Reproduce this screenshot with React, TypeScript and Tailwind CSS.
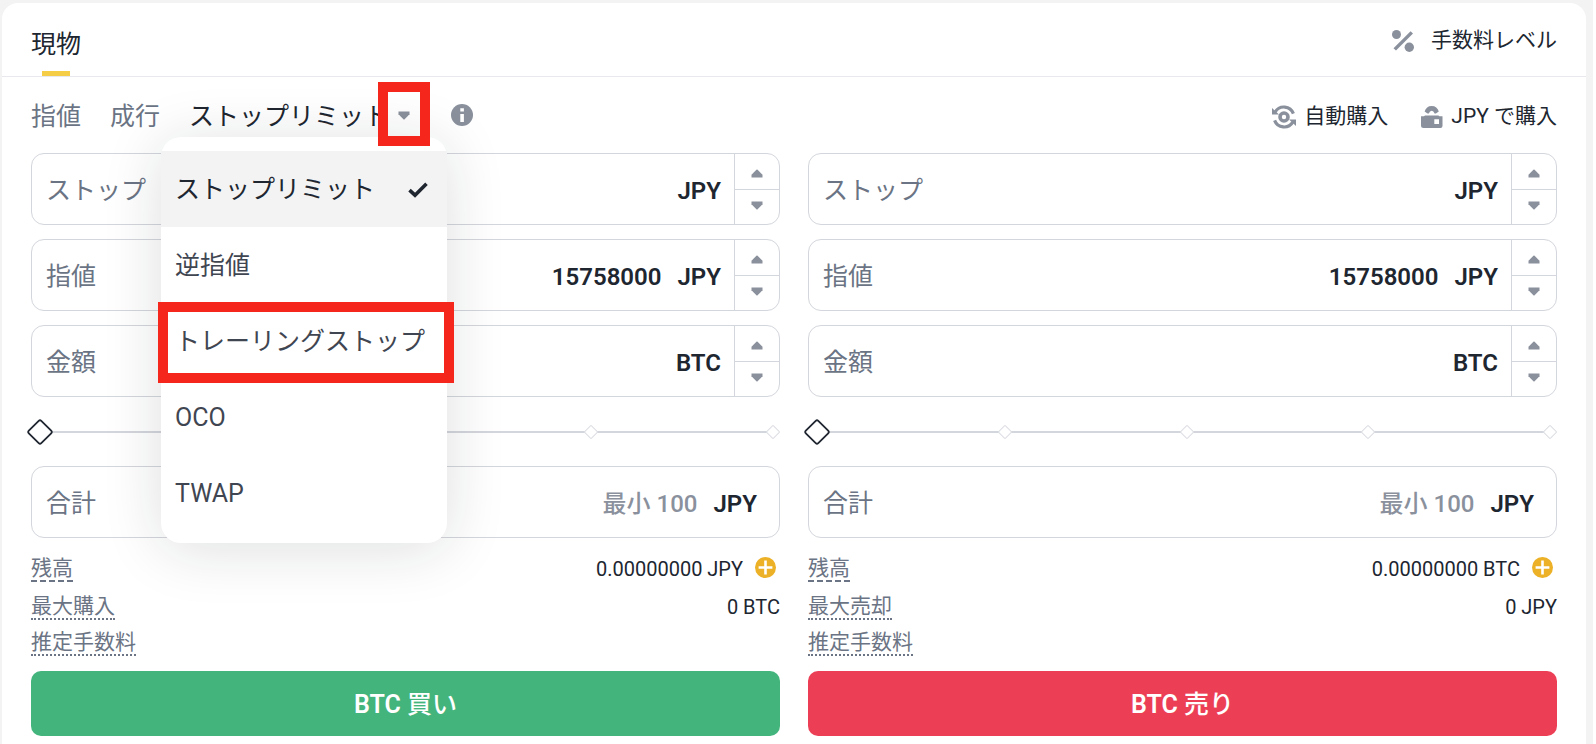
import { useState } from "react";

type Side = {
  id: string;
  maxLabel: string;
  balance: string;
  max: string;
  asset: string;
  verb: string;
  actionClass: string;
};

const sides: Side[] = [
  {
    id: "buy",
    maxLabel: "最大購入",
    balance: "0.00000000 JPY",
    max: "0 BTC",
    asset: "BTC",
    verb: "買い",
    actionClass: "bg-[#43b47c]",
  },
  {
    id: "sell",
    maxLabel: "最大売却",
    balance: "0.00000000 BTC",
    max: "0 JPY",
    asset: "BTC",
    verb: "売り",
    actionClass: "bg-[#ec3f56]",
  },
];

const orderTypes = ["ストップリミット", "逆指値", "トレーリングストップ", "OCO", "TWAP"];

function PercentIcon() {
  return (
    <svg width="22" height="22" viewBox="0 0 22 22" fill="#8a919d" aria-hidden="true">
      <circle cx="4.5" cy="4.5" r="4.5" />
      <circle cx="17.3" cy="17.2" r="4.7" />
      <path d="M18.6 1.2 21 3.6 4 20.600 1.500 18.200z" />
    </svg>
  );
}

function AutoBuyIcon() {
  return (
    <svg width="24" height="24" viewBox="0 0 24 24" fill="none" aria-hidden="true">
      <circle cx="12" cy="12" r="4" stroke="#8a919d" strokeWidth="3.6" />
      <path d="M3.200 6.800A10.200 10.200 0 0 1 21.400 8.600" stroke="#8a919d" strokeWidth="3.200" />
      <path d="M20.800 17.200A10.200 10.200 0 0 1 2.600 15.400" stroke="#8a919d" strokeWidth="3.200" />
      <path d="M0 3v6.600h7z" fill="#8a919d" />
      <path d="M24 21v-6.600h-7z" fill="#8a919d" />
    </svg>
  );
}

function WalletIcon() {
  return (
    <svg width="22" height="22" viewBox="0 0 22 22" aria-hidden="true">
      <path d="M3.600 5.600Q5.200 0 10.700 0t7.100 5.600l-2.900 1.900h-1.300Q12.600 4.700 10.700 4.700T7.800 7.500H6.500z" fill="#8a919d" />
      <path
        fillRule="evenodd"
        d="M0 10.300h3l1-0.800h13.400l1 0.800h3.100V20a2 2 0 0 1-2 2h-17a2.500 2.500 0 0 1-2.500-2.500zM13.300 13.300v4.700h4.700v-4.700z"
        fill="#8a919d"
      />
    </svg>
  );
}

function InfoIcon() {
  return (
    <svg width="22" height="22" viewBox="0 0 22 22" aria-hidden="true">
      <circle cx="11" cy="11" r="11" fill="#8a919d" />
      <path d="M9.300 4.200h3.600v3.300H9.300zM9.300 10h3.600v8H9.300z" fill="#fff" />
    </svg>
  );
}

function Caret({ up = false }: { up?: boolean }) {
  return (
    <svg
      width="12"
      height="9"
      viewBox="0 0 12 9"
      fill="#8a919d"
      className={up ? "rotate-180" : ""}
      aria-hidden="true"
    >
      <path d="M0.500 0.500h11v2.700L6.600 8.300a0.900 0.900 0 0 1-1.200 0L0.500 3.200z" />
    </svg>
  );
}

function CheckIcon() {
  return (
    <svg width="20" height="16" viewBox="0 0 20 16" aria-hidden="true">
      <path d="M1.500 8.200 7 13.200 18.500 1.800" fill="none" stroke="#202630" strokeWidth="3.600" />
    </svg>
  );
}

function PlusIcon() {
  return (
    <svg width="21" height="21" viewBox="0 0 21 21" aria-hidden="true">
      <circle cx="10.500" cy="10.500" r="10.500" fill="#ecb126" />
      <path d="M9.200 3.600h2.600v5.600h5.600v2.600h-5.600v5.600H9.200v-5.600H3.600V9.200h5.600z" fill="#fff" />
    </svg>
  );
}

function Field({
  id,
  label,
  unit,
  value,
  placeholder,
  stepper = true,
}: {
  id: string;
  label: string;
  unit: string;
  value?: string;
  placeholder?: string;
  stepper?: boolean;
}) {
  return (
    <div className="flex h-[72px] overflow-hidden rounded-[13px] border border-[#d3d6dc] bg-white">
      <div
        className={
          stepper
            ? "flex min-w-0 flex-1 items-center gap-4 pt-[3px] pr-[13px] pl-[14px]"
            : "flex min-w-0 flex-1 items-center gap-4 pt-[3px] pr-[22px] pl-[14px]"
        }
      >
        <label htmlFor={id} className="shrink-0 text-[25px] text-[#6b7484]">
          {label}
        </label>
        <input
          id={id}
          defaultValue={value}
          placeholder={placeholder}
          inputMode="decimal"
          className="w-full min-w-0 flex-1 bg-transparent text-right text-[24px] font-semibold text-[#202630] outline-none placeholder:font-medium placeholder:text-[#8a919d] placeholder:opacity-100"
        />
        <span className="text-[24px] font-semibold text-[#202630]">{unit}</span>
      </div>
      {stepper && (
        <div className="flex w-[45px] flex-col border-l border-[#d3d6dc]">
          <button
            type="button"
            aria-label={`${label}を増やす`}
            className="flex h-[35px] items-center justify-center pt-[3px]"
          >
            <Caret up />
          </button>
          <button
            type="button"
            aria-label={`${label}を減らす`}
            className="flex flex-1 items-center justify-center border-t border-[#d3d6dc] pb-[3px]"
          >
            <Caret />
          </button>
        </div>
      )}
    </div>
  );
}

function AmountSlider({ id }: { id: string }) {
  return (
    <div className="relative flex h-[69px] items-center justify-between pl-2">
      <span className="absolute inset-x-2 top-1/2 h-[2px] -translate-y-1/2 bg-[#d3d6dc]" />
      {[0, 25, 50, 75, 100].map((mark) => (
        <svg key={mark} width="14" height="14" viewBox="0 0 14 14" className="relative" aria-hidden="true">
          <rect
            x="2.300"
            y="2.300"
            width="9.400"
            height="9.400"
            rx="0.800"
            transform="rotate(45 7 7)"
            fill="#fff"
            stroke="#dcdee3"
            strokeWidth="1"
          />
        </svg>
      ))}
      <svg
        width="26"
        height="26"
        viewBox="0 0 26 26"
        className="absolute top-1/2 -left-1 -translate-y-1/2"
        aria-hidden="true"
      >
        <rect
          x="4.200"
          y="4.200"
          width="17.600"
          height="17.600"
          rx="1.800"
          transform="rotate(45 13 13)"
          fill="#fff"
          stroke="#202630"
          strokeWidth="1.800"
        />
      </svg>
      <input
        id={id}
        type="range"
        min={0}
        max={100}
        step={25}
        defaultValue={0}
        aria-label="数量の割合"
        className="absolute inset-0 h-full w-full cursor-pointer opacity-0"
      />
    </div>
  );
}

function OrderForm({ side }: { side: Side }) {
  return (
    <form className="min-w-0 flex-1" onSubmit={(e) => e.preventDefault()}>
      <div className="flex flex-col gap-[14px]">
        <Field id={`${side.id}-stop`} label="ストップ" unit="JPY" />
        <Field id={`${side.id}-limit`} label="指値" unit="JPY" value="15758000" />
        <Field id={`${side.id}-amount`} label="金額" unit="BTC" />
      </div>
      <AmountSlider id={`${side.id}-ratio`} />
      <Field id={`${side.id}-total`} label="合計" unit="JPY" placeholder="最小 100" stepper={false} />
      <dl className="mt-[13px] mb-[9px] text-[21px] leading-[23px]">
        <div className="flex h-[37px] items-center justify-between">
          <dt className="border-b-2 border-dashed border-[#6b7484] text-[#6b7484]">残高</dt>
          <dd className="flex items-center gap-3 pr-1 text-[20px] text-[#202630]">
            {side.balance}
            <button type="button" aria-label="入金" className="pb-1">
              <PlusIcon />
            </button>
          </dd>
        </div>
        <div className="flex h-[37px] items-center justify-between pt-[2px]">
          <dt className="border-b-2 border-dotted border-[#6b7484] text-[#6b7484]">{side.maxLabel}</dt>
          <dd className="text-[20px] text-[#202630]">{side.max}</dd>
        </div>
        <div className="flex h-[37px] items-center justify-between">
          <dt className="border-b-2 border-dotted border-[#6b7484] text-[#6b7484]">推定手数料</dt>
          <dd />
        </div>
      </dl>
      <button
        type="submit"
        className={`h-[65px] w-full rounded-[10px] pt-[2px] text-[25px] font-semibold text-white ${side.actionClass}`}
      >
        {side.asset} <span className="font-medium">{side.verb}</span>
      </button>
    </form>
  );
}

function OrderTypeMenu({ selected, onSelect }: { selected: string; onSelect: (type: string) => void }) {
  return (
    <ul className="absolute top-[60px] -left-7 z-10 w-[286px] rounded-[20px] bg-white pt-[14px] pb-3 shadow-[0_6px_60px_rgba(24,26,32,0.14)]">
      {orderTypes.map((type) => (
        <li key={type} className="relative">
          <button
            type="button"
            onClick={() => onSelect(type)}
            className={
              type === selected
                ? "flex h-[76px] w-full items-center justify-between bg-[#f3f3f3] pt-[2px] pr-[19px] pl-[14px] text-left text-[25px] whitespace-nowrap text-[#202630]"
                : "flex h-[76px] w-full items-center justify-between pt-[2px] pr-[19px] pl-[14px] text-left text-[25px] whitespace-nowrap text-[#3f4651]"
            }
          >
            {type}
            {type === selected && <CheckIcon />}
          </button>
          {type === "トレーリングストップ" && (
            <span className="pointer-events-none absolute -top-px -right-[7px] -left-[3px] h-[81px] border-10 border-[#f5261b]" />
          )}
        </li>
      ))}
    </ul>
  );
}

export default function App() {
  const [orderType, setOrderType] = useState(orderTypes[0]);

  return (
    <div className="bg-white pr-[3px] font-['Roboto','Noto_Sans_CJK_JP',sans-serif]">
      <div className="min-h-screen bg-[#f3f3f3] pt-[3px] pr-[7px] pl-[2px]">
        <main className="min-h-[741px] rounded-t-2xl bg-white pb-2">
          <header className="flex h-[74px] justify-between border-b border-[#e8e9ec] px-[29px]">
            <a href="#spot" className="flex flex-col items-center justify-end text-[25px] leading-[30px] text-[#202630]">
              現物
              <span className="mt-[11px] h-[5px] w-7 bg-[#f5cd46]" />
            </a>
            <a href="#fees" className="flex items-center gap-[17px] pt-[2px] text-[21px] text-[#202630]">
              <PercentIcon />
              手数料レベル
            </a>
          </header>

          <div className="flex h-[76px] items-center justify-between px-[29px]">
            <div className="flex items-center gap-[29px] text-[25px] whitespace-nowrap text-[#6b7484]">
              <button type="button" className="pt-1">
                指値
              </button>
              <button type="button" className="pt-1">
                成行
              </button>
              <div className="relative flex h-[76px] items-center">
                <button type="button" className="flex items-center gap-[9px] text-[#202630]">
                  <span className="pt-1">{orderType}</span>
                  <Caret />
                </button>
                <span className="pointer-events-none absolute top-[5px] left-[189px] z-20 h-16 w-[52px] border-10 border-[#f5261b]" />
                <OrderTypeMenu selected={orderType} onSelect={setOrderType} />
              </div>
              <button type="button" aria-label="注文タイプの説明" className="ml-3">
                <InfoIcon />
              </button>
            </div>
            <div className="flex items-center gap-[33px] pt-[3px] text-[21px] text-[#202630]">
              <a href="#auto" className="flex items-center gap-2">
                <AutoBuyIcon />
                自動購入
              </a>
              <a href="#deposit" className="flex items-center gap-2">
                <WalletIcon />
                JPY で購入
              </a>
            </div>
          </div>

          <div className="flex gap-7 px-[29px]">
            {sides.map((side) => (
              <OrderForm key={side.id} side={side} />
            ))}
          </div>
        </main>
      </div>
    </div>
  );
}
